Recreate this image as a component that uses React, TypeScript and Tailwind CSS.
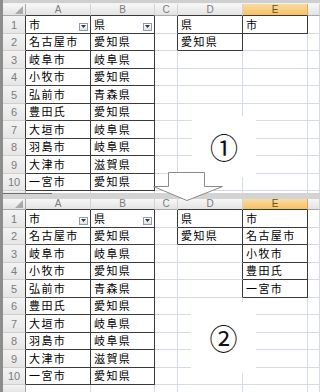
type Box = { r0: number; r1: number; c0: number; c1: number };

const letters = ["A", "B", "C", "D", "E", "F"];
const jp = { fontFamily: '"Noto Sans CJK JP", "Noto Sans", sans-serif' };
const lat = { fontFamily: '"Liberation Sans", Arial, sans-serif' };

const cityA = ["市", "名古屋市", "岐阜市", "小牧市", "弘前市", "豊田氏", "大垣市", "羽島市", "大津市", "一宮市"];
const prefB = ["県", "愛知県", "岐阜県", "愛知県", "青森県", "愛知県", "岐阜県", "岐阜県", "滋賀県", "愛知県"];

function inBox(boxes: Box[], r: number, c: number) {
  return boxes.some((b) => r >= b.r0 && r <= b.r1 && c >= b.c0 && c <= b.c1);
}

function FilterBtn() {
  return (
    <span className="absolute right-[2px] bottom-[2px] flex h-[8px] w-[9px] items-center justify-center border border-[#8e9cb0] bg-gradient-to-b from-white to-[#dde2ea]">
      <svg width="5" height="3" viewBox="0 0 5 3">
        <path d="M0 0H5L2.5 3Z" fill="#333" />
      </svg>
    </span>
  );
}

function Sheet({
  cells,
  boxes,
  headH,
  tailH,
}: {
  cells: Record<string, string>;
  boxes: Box[];
  headH: string;
  tailH: string;
}) {
  const rows = [1, 2, 3, 4, 5, 6, 7, 8, 9, 10, 11];
  return (
    <div className="grid grid-cols-[23px_65px_64px_23px_65px_65px_12px]">
      {/* column header */}
      <div
        className={`${headH} flex items-end justify-end border-r border-b border-[#a8a8a8] bg-gradient-to-b from-[#f7f7f7] to-[#e3e3e3] pr-[2px] pb-[1px]`}
      >
        <svg width="8" height="8" viewBox="0 0 8 8">
          <path d="M8 0V8H0Z" fill="#a9a9a9" />
        </svg>
      </div>
      {letters.map((l, i) => {
        const c = i + 1;
        const sel = l === "E";
        const dark = inBox(boxes, 1, c);
        return (
          <div
            key={l}
            style={lat}
            className={`${headH} flex items-center justify-center border-r border-b text-[10px] leading-none ${
              sel
                ? "border-r-[#e3a64f] bg-gradient-to-b from-[#fbdc9c] to-[#f5c168] text-[#6a4e20]"
                : "border-r-[#d2d2d2] bg-gradient-to-b from-[#f7f7f7] to-[#e3e3e3] text-[#7a7a7a]"
            } ${dark ? "border-b-[#3a3a3a]" : sel ? "border-b-[#d9a24c]" : "border-b-[#a8a8a8]"}`}
          >
            {l === "F" ? "" : l}
          </div>
        );
      })}
      {rows.map((r) => {
        const tail = r === 11;
        const h = tail ? tailH : "h-[17.5px]";
        return [
          <div
            key={`n${r}`}
            style={lat}
            className={`${h} flex items-center justify-center overflow-hidden border-r bg-gradient-to-b from-[#f3f3f3] to-[#e6e6e6] pt-[2px] text-[11px] leading-none text-[#7c7c7c] ${
              tail ? "" : "border-b border-b-[#cfcfcf]"
            } ${inBox(boxes, r, 1) ? "border-r-[#3a3a3a]" : "border-r-[#a8a8a8]"}`}
          >
            {tail ? "" : r}
          </div>,
          ...letters.map((l, i) => {
            const c = i + 1;
            const txt = cells[`${l}${r}`];
            const rDark = inBox(boxes, r, c) || inBox(boxes, r, c + 1);
            const bDark = inBox(boxes, r, c) || inBox(boxes, r + 1, c);
            return (
              <div
                key={`${l}${r}`}
                style={jp}
                className={`${h} relative flex items-center overflow-hidden whitespace-nowrap border-r pl-[3px] text-[11px] leading-none tracking-[1.4px] text-black ${
                  tail ? "" : "border-b"
                } ${rDark ? "border-r-[#3a3a3a]" : "border-r-[#d5dbe6]"} ${
                  bDark ? "border-b-[#3a3a3a]" : "border-b-[#d5dbe6]"
                }`}
              >
                {txt}
                {r === 1 && (c === 1 || c === 2) && <FilterBtn />}
              </div>
            );
          }),
        ];
      })}
    </div>
  );
}

function build(extraE: string[]) {
  const cells: Record<string, string> = {};
  cityA.forEach((v, i) => (cells[`A${i + 1}`] = v));
  prefB.forEach((v, i) => (cells[`B${i + 1}`] = v));
  cells.D1 = "県";
  cells.D2 = "愛知県";
  cells.E1 = "市";
  extraE.forEach((v, i) => (cells[`E${i + 2}`] = v));
  return cells;
}

export default function App() {
  const tableAB: Box = { r0: 1, r1: 10, c0: 1, c1: 2 };
  const boxD: Box = { r0: 1, r1: 2, c0: 4, c1: 4 };
  const top = build([]);
  const bottom = build(["名古屋市", "小牧市", "豊田氏", "一宮市"]);

  return (
    <div className="relative flex h-[392px] w-[320px] overflow-hidden bg-white">
      <div className="w-[3px] shrink-0 bg-[#8d8d8d]" />
      <div className="flex min-w-0 flex-1 flex-col">
        <div className="h-[4px] border-b border-[#f2f2f2] bg-[#cfcfcf]" />
        <Sheet cells={top} boxes={[tableAB, boxD, { r0: 1, r1: 1, c0: 5, c1: 5 }]} headH="h-[12px]" tailH="h-[2px]" />
        <div className="flex h-[6px] flex-col bg-[#d3d3d3]">
          <div className="h-[1px] w-[49px] bg-[#6e6e6e]" />
        </div>
        <Sheet cells={bottom} boxes={[tableAB, boxD, { r0: 1, r1: 5, c0: 5, c1: 5 }]} headH="h-[11px]" tailH="h-[7px]" />
      </div>

      {/* text boxes with circled numbers */}
      <div
        style={jp}
        className="absolute left-[192px] top-[116px] flex h-[61px] w-[64px] items-center justify-center bg-white text-[28px] leading-none text-[#111]"
      >
        ①
      </div>
      <div
        style={jp}
        className="absolute left-[191px] top-[302px] flex h-[71px] w-[65px] items-center justify-center bg-white text-[28px] leading-none text-[#111]"
      >
        ②
      </div>

      {/* down arrow */}
      <svg className="absolute left-[150px] top-[169px]" width="76" height="34" viewBox="0 0 76 34">
        <path d="M18.5 3.5H54.5V17.5H72.5L37 31.5L3.5 17.5H18.5Z" fill="white" stroke="#8a8a8a" strokeWidth="1" />
      </svg>
    </div>
  );
}
